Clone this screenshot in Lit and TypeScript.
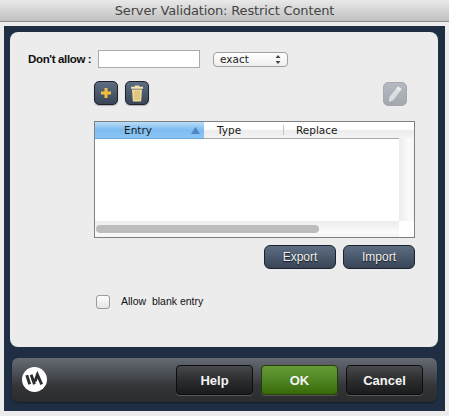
import { LitElement, html, css } from "lit";
import { customElement } from "lit/decorators.js";

@customElement("app-root")
export class AppRoot extends LitElement {
  static styles = css`
    :host { display: block; width: 449px; height: 416px; background: #ececec; font-family: "Liberation Sans", Arial, sans-serif; overflow: hidden; }
    .title { height: 21px; border-bottom: 1px solid #8b8b8b; background: linear-gradient(#e9e9e9, #c0c0c0); display: flex; align-items: center; justify-content: center; font: 13px "DejaVu Sans", sans-serif; letter-spacing: -0.15px; color: #444; }
    .window { margin: 4px 4px 0 4px; height: 385px; background: #1f2e42; padding: 6px 7px 0 6px; box-sizing: border-box; display: flex; flex-direction: column; }
    .panel { height: 315px; flex: none; background: #ececec; border-radius: 8px; box-sizing: border-box; position: relative; padding: 18px 23px 0 84px; display: flex; flex-direction: column; }
    .row1 { display: flex; align-items: center; height: 18px; margin-left: -66px; }
    .lbl { width: 70px; font-size: 11.5px; font-weight: bold; color: #111; white-space: nowrap; letter-spacing: -0.35px; }
    .input { width: 102px; height: 18px; box-sizing: border-box; background: #fff; border: 1px solid #a9a9a9; }
    .select { margin-left: 13px; width: 75px; height: 15px; box-sizing: border-box; border: 1px solid #a0a0a0; border-radius: 4px; background: linear-gradient(#fff, #efefef); font: 10.5px "DejaVu Sans", sans-serif; color: #222; padding-left: 6px; display: flex; align-items: center; justify-content: space-between; padding-right: 6px; line-height: 1; }
    .select svg { display: block; }
    .tools { display: flex; gap: 7px; margin-top: 13px; height: 24px; }
    .icon { width: 24px; height: 24px; box-sizing: border-box; border-radius: 5px; border: 1px solid #1c222b; background: linear-gradient(#5d6d82, #3a4657); display: flex; align-items: center; justify-content: center; box-shadow: 0 1px 1px rgba(0,0,0,.25); }
    .icon.off { margin-left: auto; margin-top: 1px; margin-right: 8px; background: linear-gradient(#b5b9c1, #a3a7af); border-color: #a6a8ad; box-shadow: none; }
    .table { margin-top: 16px; height: 117px; box-sizing: border-box; border: 1px solid #808080; background: #fff; display: grid; grid-template-columns: 1fr 15px; grid-template-rows: 16px 1fr 16px; }
    .head { grid-column: 1 / 3; display: flex; height: 16px; border-bottom: 1px solid #a8a8a8; background: linear-gradient(#fff 45%, #ebebeb 55%, #f4f4f4); font: 10.5px "DejaVu Sans", sans-serif; color: #1a1a1a; box-sizing: content-box; }
    .col { display: flex; align-items: center; box-sizing: border-box; white-space: nowrap; }
    .entry { width: 109px; padding-left: 29px; background: linear-gradient(#b9dcf8, #7dbcf0 50%, #8cc5f4); border-bottom: 1px solid #6aa8dc; height: 17px; justify-content: space-between; padding-right: 4px; }
    .type { width: 80px; padding-left: 13px; position: relative; }
    .type::after { content: ""; position: absolute; right: 0; top: 3px; bottom: 3px; width: 1px; background: #c4c4c4; }
    .replace { padding-left: 12px; }
    .body { grid-row: 2; grid-column: 1; }
    .vs { grid-row: 2; grid-column: 2; background: linear-gradient(90deg, #ececec, #fbfbfb 70%, #f4f4f4); }
    .hs { grid-row: 3; grid-column: 1; background: linear-gradient(#ececec, #fbfbfb 70%, #f4f4f4); padding: 4px 0 0 1px; box-sizing: border-box; }
    .thumb { width: 223px; height: 8px; border-radius: 4px; background: #bdbdbd; }
    .io { display: flex; justify-content: flex-end; gap: 7px; margin-top: 7px; }
    .btn { width: 72px; height: 24px; padding-bottom: 1px; box-sizing: border-box; border: 1px solid #1c222b; border-radius: 6px; background: linear-gradient(#5d6d82, #394557); color: #f2f2f2; font-size: 12px; display: flex; align-items: center; justify-content: center; text-shadow: 0 1px 1px #111; }
    .check { display: flex; align-items: center; margin-top: 26px; margin-left: 2px; height: 14px; font-size: 10.5px; color: #111; }
    .check span { position: relative; top: -1px; }
    .box { width: 14px; height: 14px; box-sizing: border-box; border: 1px solid #9a9a9a; border-radius: 3px; background: linear-gradient(#fff, #e4e4e4); margin-right: 11px; }
    .bar { margin: 11px 1px 0 2px; height: 44px; flex: none; border-radius: 6px; background: linear-gradient(#666a72, #4b4e55 35%, #323436 65%, #2b2c2e); display: flex; align-items: center; padding: 0 14px 0 10px; box-sizing: border-box; box-shadow: 0 1px 2px rgba(0,0,0,.4); }
    .logo { width: 25px; height: 25px; display: block; margin-right: auto; margin-bottom: 1px; }
    .dlg { width: 77px; height: 30px; box-sizing: border-box; border: 1px solid #0e0e0e; border-radius: 4px; background: linear-gradient(#47494c, #2c2d2f 50%, #1a1b1c); color: #f4f4f4; font-size: 13px; font-weight: bold; display: flex; align-items: center; justify-content: center; margin-left: 8px; box-shadow: 0 1px 0 rgba(255,255,255,.2); }
    .dlg.ok { background: linear-gradient(#659a35, #4f8524 50%, #376a06); border-color: #24400a; }
  `;

  render() {
    return html`
      <div class="title">Server Validation: Restrict Content</div>
      <div class="window">
        <div class="panel">
          <div class="row1">
            <div class="lbl">Don't allow :</div>
            <div class="input"></div>
            <div class="select"><span>exact</span>
              <svg width="6" height="9" viewBox="0 0 6 9"><path d="M3 0L5.500 3H.5zM3 9L.5 6h5z" fill="#444"/></svg>
            </div>
          </div>
          <div class="tools">
            <div class="icon"><svg width="12" height="12" viewBox="0 0 12 12"><path d="M4.500 1h3v3.500H11v3H7.500V11h-3V7.500H1v-3h3.500z" fill="#f2c13c"/></svg></div>
            <div class="icon"><svg width="14" height="17" viewBox="0 0 14 17"><path d="M5 .5h4l.5 1.200H13v2H1v-2h3.500z" fill="#f3e2ad"/><path d="M2 4.500h10l-.8 11.500a.8.8 0 0 1-.8.6H3.600a.8.8 0 0 1-.8-.6z" fill="#efd998"/><path d="M5 6v9M7 6v9M9 6v9" stroke="#c9a960" stroke-width=".8"/></svg></div>
            <div class="icon off"><svg width="16" height="18" viewBox="0 0 16 18"><path d="M11 1.500l3.500 2.500L6.500 15 2 17l.4-5z" fill="#dcdee2"/><path d="M11 1.500l3.500 2.500-1.500 2-3.500-2.500z" fill="#eff0f2"/></svg></div>
          </div>
          <div class="table">
            <div class="head">
              <div class="col entry"><span>Entry</span><svg width="9" height="7" viewBox="0 0 9 7"><path d="M4.500 0L9 7H0z" fill="#4f86c6"/></svg></div>
              <div class="col type">Type</div>
              <div class="col replace">Replace</div>
            </div>
            <div class="body"></div>
            <div class="vs"></div>
            <div class="hs"><div class="thumb"></div></div>
          </div>
          <div class="io"><div class="btn">Export</div><div class="btn">Import</div></div>
          <div class="check"><div class="box"></div><span>Allow&nbsp; blank entry</span></div>
        </div>
        <div class="bar">
          <svg class="logo" viewBox="0 0 26 26"><circle cx="13" cy="13" r="13" fill="#fff"/><path d="M5 8.500l3 9.500M9.500 8l3.500 10M13.500 15l2.500-7 4.500 10" fill="none" stroke="#2b2c2e" stroke-width="3"/></svg>
          <div class="dlg">Help</div>
          <div class="dlg ok">OK</div>
          <div class="dlg">Cancel</div>
        </div>
      </div>
    `;
  }
}
